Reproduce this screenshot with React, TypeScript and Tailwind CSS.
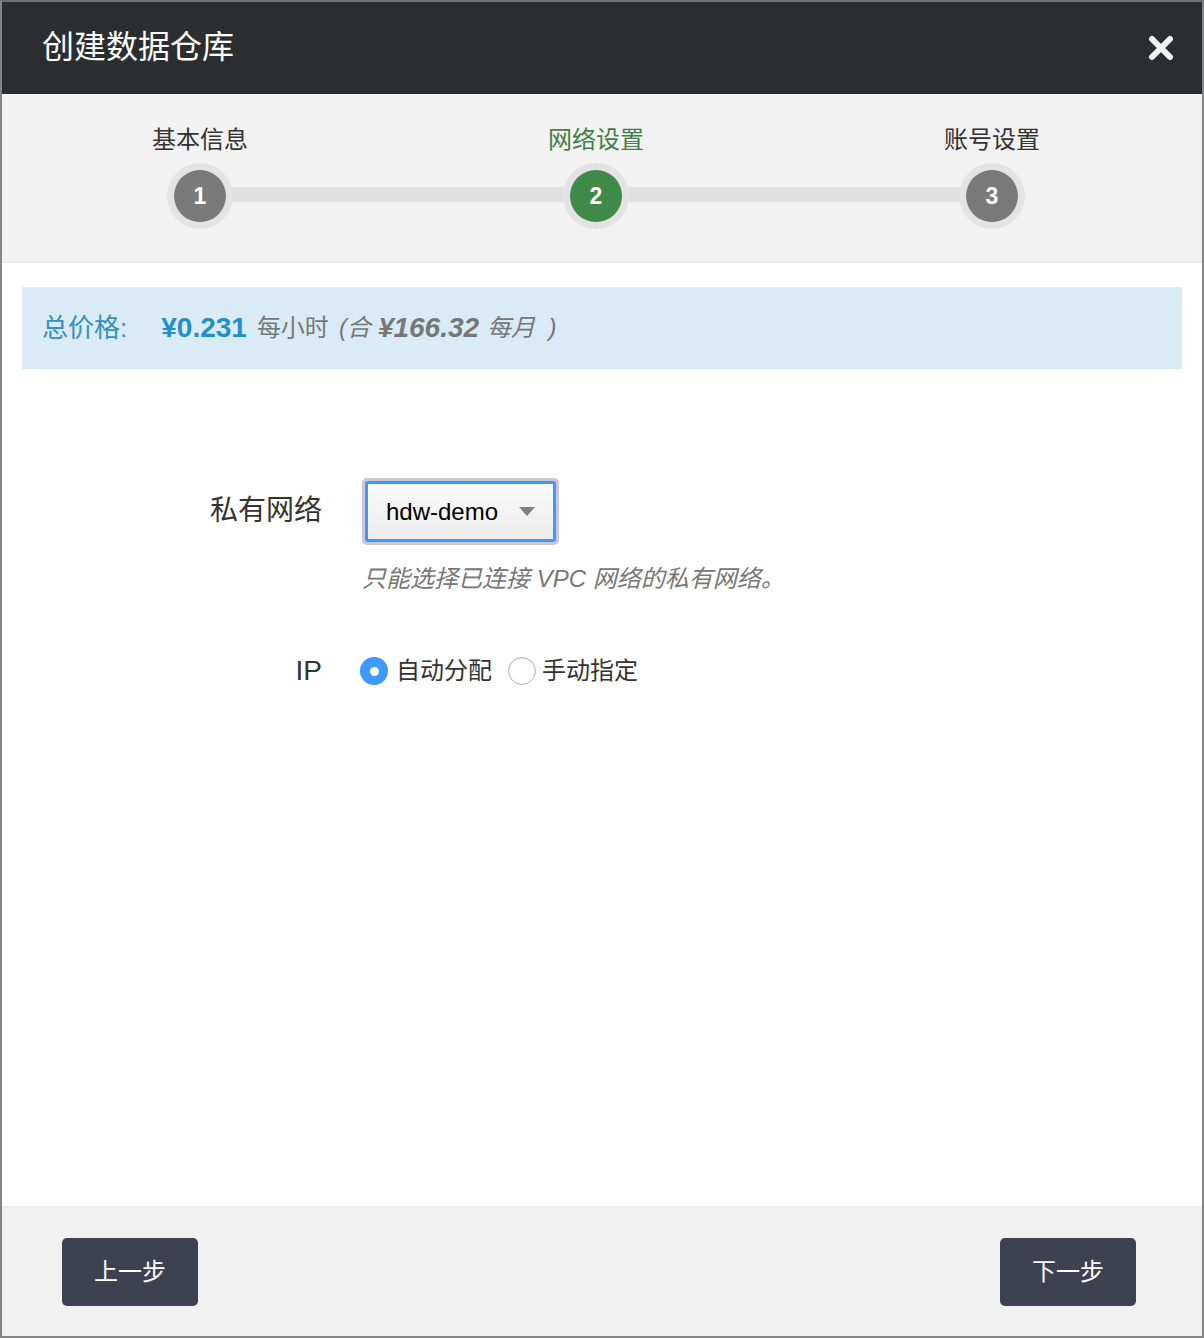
import React from "react";

const font = { fontFamily: '"Helvetica Neue", "Liberation Sans", Arial, "Noto Sans CJK SC", sans-serif' };

function Step({ n, label, active }: { n: number; label: string; active?: boolean }) {
  return (
    <div className="flex flex-col items-center w-[396px] relative z-10">
      <div className={`text-[24px] leading-none h-[24px] ${active ? "text-[#3f8048]" : "text-[#333]"}`}>{label}</div>
      <div className="mt-[11px] w-[66px] h-[66px] rounded-full bg-[#e3e3e3] flex items-center justify-center">
        <div
          className={`w-[52px] h-[52px] rounded-full flex items-center justify-center text-white text-[23px] font-bold ${
            active ? "bg-[#3f8a48]" : "bg-[#7a7a7a]"
          }`}
        >
          {n}
        </div>
      </div>
    </div>
  );
}

export default function App() {
  return (
    <div className="w-[1204px] h-[1338px] border-2 border-[#858585] border-t-[#6f6f6f] flex flex-col bg-white" style={font}>
      <div className="h-[92px] bg-[#2b2e30] flex items-center justify-between pl-[40px] pr-[28px] shrink-0">
        <div className="text-white text-[32px] leading-none -mt-[2px]">创建数据仓库</div>
        <svg width="26" height="26" viewBox="0 0 26 26">
          <path d="M4 4 L22 22 M22 4 L4 22" stroke="#f2f2f2" strokeWidth="6" strokeLinecap="round" />
        </svg>
      </div>

      <div className="h-[169px] bg-[#f2f2f2] border-b border-[#e6e6e6] shrink-0 relative">
        <div className="absolute left-[228px] right-[240px] top-[93px] h-[15px] bg-[#e0e0e0]" />
        <div className="flex pt-[34px]">
          <Step n={1} label="基本信息" />
          <Step n={2} label="网络设置" active />
          <Step n={3} label="账号设置" />
        </div>
      </div>

      <div className="px-[20px] pt-[24px]">
        <div className="h-[82px] bg-[#d9ecf5] flex items-center pl-[20px]">
          <span className="text-[#3a8ec0] text-[26px]">总价格:</span>
          <span className="ml-[34px] text-[#1e8fcf] text-[28px] font-bold">¥0.231</span>
          <span className="ml-[10px] text-[#777] text-[24px]">每小时</span>
          <span className="ml-[10px] text-[#777] text-[24px] italic">(合</span>
          <span className="ml-[7px] text-[#777] text-[28px] italic font-bold">¥166.32</span>
          <span className="ml-[8px] text-[#777] text-[24px] italic">每月&nbsp; )</span>
        </div>
      </div>

      <div className="flex-1 pt-[109px]">
        <div className="flex items-start">
          <div className="w-[320px] text-right text-[28px] text-[#333] leading-none pt-[19px]">私有网络</div>
          <div className="ml-[40px]">
            <div className="w-[197px] h-[67px] rounded-[5px] border-2 border-[#c9c8d6] bg-[#c9c8d6] p-[1px]">
              <div className="w-full h-full rounded-[3px] border-[3px] border-[#3d99fb] bg-gradient-to-b from-[#fafafa] to-[#ececec] flex items-center justify-between pl-[18px] pr-[18px]">
                <span className="text-[24px] text-black">hdw-demo</span>
                <svg width="16" height="9" viewBox="0 0 16 9">
                  <path d="M0 0 L16 0 L8 9 Z" fill="#808080" />
                </svg>
              </div>
            </div>
            <div className="mt-[22px] text-[24px] italic text-[#777] leading-none">只能选择已连接 VPC 网络的私有网络。</div>
          </div>
        </div>

        <div className="flex items-center mt-[62px]">
          <div className="w-[320px] text-right text-[28px] text-[#333] leading-none">IP</div>
          <div className="ml-[38px] flex items-center">
            <div className="w-[28px] h-[28px] rounded-full bg-[#3d99fb] flex items-center justify-center">
              <div className="w-[9px] h-[9px] rounded-full bg-white" />
            </div>
            <span className="ml-[8px] text-[24px] text-[#333]">自动分配</span>
            <div className="ml-[16px] w-[28px] h-[28px] rounded-full border border-[#b5b5b5] bg-white shadow-[inset_0_1px_2px_rgba(0,0,0,0.1)]" />
            <span className="ml-[6px] text-[24px] text-[#333]">手动指定</span>
          </div>
        </div>
      </div>

      <div className="h-[130px] bg-[#f1f1f1] border-t border-[#e8e8e8] flex items-center justify-between pl-[60px] pr-[66px] shrink-0">
        <button className="w-[136px] h-[68px] rounded-[5px] bg-[#3d4150] text-white text-[24px]">上一步</button>
        <button className="w-[136px] h-[68px] rounded-[5px] bg-[#3d4150] text-white text-[24px]">下一步</button>
      </div>
    </div>
  );
}
